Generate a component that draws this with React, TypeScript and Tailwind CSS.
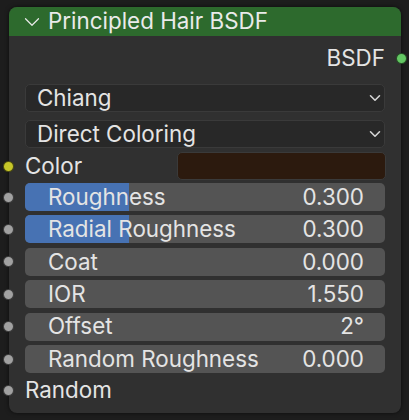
import { ChevronDown } from 'lucide-react';

const font = { fontFamily: 'Inter, "Noto Sans", sans-serif' };

function Socket({ color, top, right }: { color: string; top: number; right?: boolean }) {
    return (
        <div
            className={`absolute w-[11px] h-[11px] rounded-full border border-black/60 ${color}`}
            style={right ? { right: -6, top: top - 5.5 } : { left: -6, top: top - 5.5 }}
        />
    );
}

function Dropdown({ label }: { label: string }) {
    return (
        <div className="h-[28px] mx-[16px] flex items-center justify-between pl-[11px] pr-0 rounded-[5px] bg-[#282828] border border-[#3a3a3a]">
            <span>{label}</span>
            <ChevronDown size={18} strokeWidth={2.1} className="text-[#d6d6d6]" />
        </div>
    );
}

function Slider({ label, value, fill }: { label: string; value: string; fill?: number }) {
    return (
        <div className="relative h-[28px] mx-[16px] rounded-[5px] bg-[#545454] overflow-hidden">
            {fill !== undefined && <div className="absolute inset-y-0 left-0 bg-[#4772b3]" style={{ width: `${fill}%` }} />}
            <div className="relative h-full flex items-center justify-between pl-[23px] pr-[21px]">
                <span>{label}</span>
                <span>{value}</span>
            </div>
        </div>
    );
}

export default function App() {
    const rows = [
        { label: 'Roughness', value: '0.300', fill: 29 },
        { label: 'Radial Roughness', value: '0.300', fill: 29 },
        { label: 'Coat', value: '0.000' },
        { label: 'IOR', value: '1.550' },
        { label: 'Offset', value: '2°' },
        { label: 'Random Roughness', value: '0.000' },
    ];

    return (
        <div className="w-[409px] h-[420px] bg-[#1d1d1d] pt-[7px] pl-[9px]" style={font}>
            <div className="relative w-[392px] h-[406px] rounded-[8px] bg-[#303030] text-[#e4e4e4] text-[22.4px] leading-none shadow-[0_0_4px_rgba(0,0,0,0.6)]">
                {/* header */}
                <div className="h-[29px] rounded-t-[8px] bg-[#2d6a2d] flex items-center pl-[9.5px] text-[#eaeaea]">
                    <ChevronDown size={26} strokeWidth={1.1} className="mr-[3.5px]" />
                    <span>Principled Hair BSDF</span>
                </div>

                {/* output */}
                <div className="h-[32px] mt-[6px] flex items-center justify-end pr-[16px]">BSDF</div>
                <Socket color="bg-[#63c763]" top={51} right />

                <div className="mt-[10px] flex flex-col gap-[8px]">
                    <Dropdown label="Chiang" />
                    <Dropdown label="Direct Coloring" />
                </div>

                {/* color */}
                <div className="mt-[4px] h-[28px] flex items-center pl-[16px] pr-[15px]">
                    <span className="flex-1">Color</span>
                    <div className="w-[209px] h-full rounded-[5px] bg-[#2c1a0e] border border-[#3a3a3a]" />
                </div>
                <Socket color="bg-[#c7c729]" top={159} />

                <div className="mt-[3px] flex flex-col gap-[4.4px]">
                    {rows.map((r) => (
                        <Slider key={r.label} {...r} />
                    ))}
                </div>
                {rows.map((r, i) => (
                    <Socket key={r.label} color="bg-[#a1a1a1]" top={190 + i * 32.4} />
                ))}

                <div className="h-[34px] flex items-center pl-[16px]">Random</div>
                <Socket color="bg-[#a1a1a1]" top={383} />
            </div>
        </div>
    );
}
